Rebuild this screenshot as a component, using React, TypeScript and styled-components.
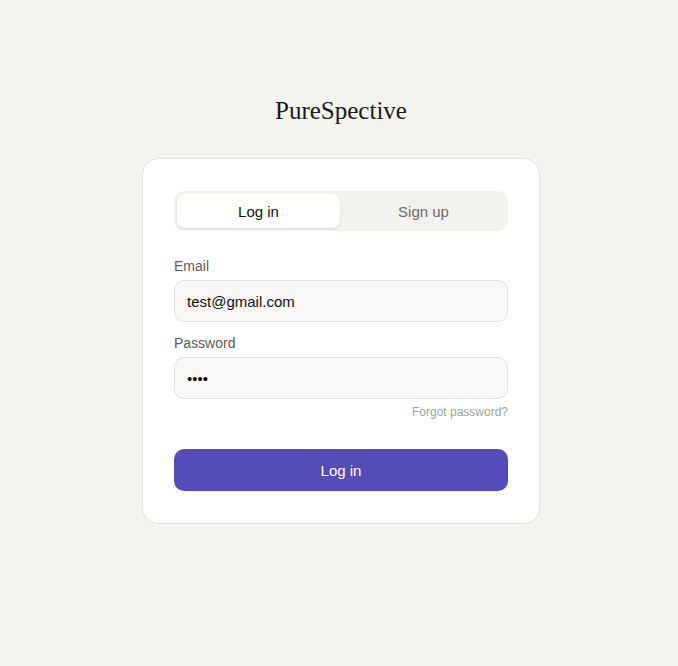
import { useState } from "react";
import styled, { createGlobalStyle } from "styled-components";

const GlobalStyle = createGlobalStyle`
  html, body {
    margin: 0;
    padding: 0;
    background: #f4f3ef;
  }
  body {
    font-family: "Liberation Sans", Arial, sans-serif;
  }
`;

const Page = styled.div`
  min-height: 666px;
  display: flex;
  flex-direction: column;
  align-items: center;
  padding: 97px 0 0 4px;
  box-sizing: border-box;
`;

const Brand = styled.h1`
  margin: 0 0 33px;
  font-family: "Liberation Serif", "Times New Roman", serif;
  font-weight: 400;
  font-size: 25px;
  line-height: 28px;
  color: #1a1a1a;
`;

const Card = styled.div`
  width: 398px;
  box-sizing: border-box;
  background: #fff;
  border: 1px solid #e4e2de;
  border-radius: 16px;
  padding: 32px 31px 32px;
`;

const Tabs = styled.div`
  display: grid;
  grid-template-columns: 1fr 1fr;
  gap: 2px;
  padding: 3px;
  background: #f3f2ef;
  border-radius: 10px;
  margin-bottom: 27px;
`;

const Tab = styled.button<{ $active?: boolean }>`
  height: 34px;
  border: none;
  border-radius: 8px;
  font-family: inherit;
  font-size: 15px;
  cursor: pointer;
  background: ${(p) => (p.$active ? "#fff" : "transparent")};
  color: ${(p) => (p.$active ? "#111" : "#6b6b6b")};
  box-shadow: ${(p) => (p.$active ? "0 1px 3px rgba(0,0,0,0.1)" : "none")};
`;

const Field = styled.div`
  display: flex;
  flex-direction: column;
  gap: 6px;
  margin-bottom: 13px;
`;

const Label = styled.label`
  font-size: 14px;
  line-height: 16px;
  color: #5c5c5c;
`;

const Input = styled.input`
  height: 42px;
  box-sizing: border-box;
  padding: 0 12px;
  border: 1px solid #e2e0dc;
  border-radius: 10px;
  background: #f9f8f6;
  font-family: inherit;
  font-size: 15px;
  color: #111;
  outline: none;
`;

const Forgot = styled.a`
  display: block;
  text-align: right;
  margin-top: -8px;
  font-size: 12px;
  line-height: 16px;
  color: #a0a0a0;
  text-decoration: none;
  margin-bottom: 29px;
`;

const Submit = styled.button`
  width: 100%;
  height: 42px;
  border: none;
  border-radius: 10px;
  background: #554db7;
  color: #fff;
  font-family: inherit;
  font-size: 15px;
  cursor: pointer;
`;

export default function App() {
  const [tab, setTab] = useState<"login" | "signup">("login");
  return (
    <>
      <GlobalStyle />
      <Page>
        <Brand>PureSpective</Brand>
        <Card>
          <Tabs>
            <Tab $active={tab === "login"} onClick={() => setTab("login")}>
              Log in
            </Tab>
            <Tab $active={tab === "signup"} onClick={() => setTab("signup")}>
              Sign up
            </Tab>
          </Tabs>
          <Field>
            <Label>Email</Label>
            <Input type="email" defaultValue="test@gmail.com" />
          </Field>
          <Field>
            <Label>Password</Label>
            <Input type="password" defaultValue="test" />
          </Field>
          <Forgot href="#">Forgot password?</Forgot>
          <Submit>Log in</Submit>
        </Card>
      </Page>
    </>
  );
}
